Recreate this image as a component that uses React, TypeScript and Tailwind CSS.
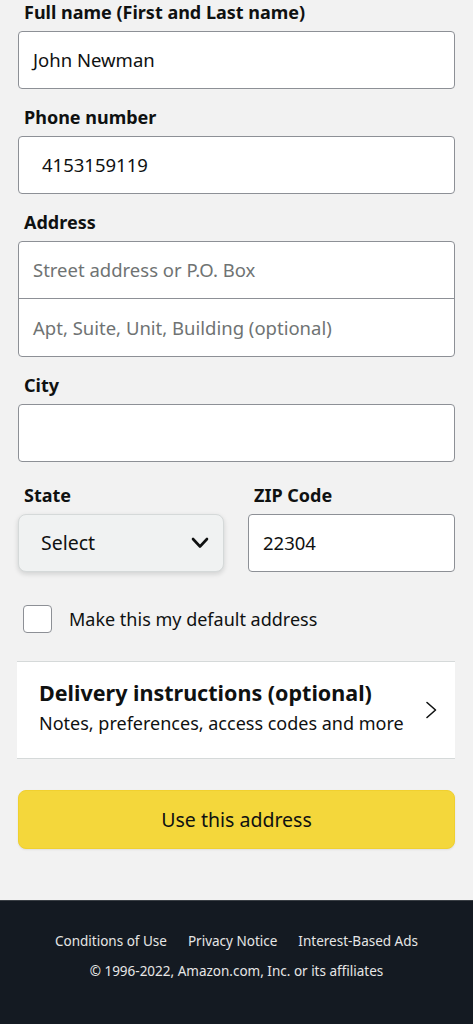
const font = { fontFamily: '"Noto Sans", "Open Sans", Arial, sans-serif' };

function Label({ children, className = "" }: { children: React.ReactNode; className?: string }) {
  return (
    <div className={`h-[24px] leading-[24px] text-[18px] font-bold text-[#0f1111] pl-[6px] ${className}`}>
      {children}
    </div>
  );
}

function TextBox({ value, placeholder, indent = "pl-[14px]" }: { value?: string; placeholder?: string; indent?: string }) {
  return (
    <div
      className={`h-[58px] bg-white border border-[#8d9096] rounded-[4px] flex items-center ${indent} text-[18.5px] ${
        value ? "text-[#0f1111]" : "text-[#6f7373]"
      }`}
    >
      {value ?? placeholder}
    </div>
  );
}

export default function App() {
  return (
    <div className="min-h-[1024px] bg-[#f2f2f2] flex flex-col" style={font}>
      <div className="px-[18px] flex-1">
        {/* Nom complet */}
        <Label>Full name (First and Last name)</Label>
        <div className="mt-[7px]">
          <TextBox value="John Newman" />
        </div>

        <Label className="mt-[16px]">Phone number</Label>
        <div className="mt-[7px]">
          <TextBox value="4153159119" indent="pl-[23px]" />
        </div>

        <Label className="mt-[16px]">Address</Label>
        <div className="mt-[7px] bg-white border border-[#8d9096] rounded-[4px] text-[18.5px] text-[#6f7373]">
          <div className="h-[57px] flex items-center pl-[14px] border-b border-[#8d9096]">Street address or P.O. Box</div>
          <div className="h-[57px] flex items-center pl-[14px]">Apt, Suite, Unit, Building (optional)</div>
        </div>

        <Label className="mt-[16px]">City</Label>
        <div className="mt-[7px]">
          <TextBox value="" />
        </div>

        <div className="mt-[21px] flex gap-[24px]">
          <div className="w-[206px]">
            <Label>State</Label>
            <div className="mt-[7px] h-[58px] bg-[#f0f2f2] border border-[#d5d9d9] rounded-[8px] shadow-[0_2px_5px_rgba(15,17,17,0.15)] flex items-center justify-between pl-[22px] pr-[14px] text-[19.5px] text-[#0f1111]">
              <span>Select</span>
              <svg width="18" height="12" viewBox="0 0 18 12" fill="none">
                <polyline points="2,2 9,9.5 16,2" stroke="#0f1111" strokeWidth="2.6" strokeLinecap="round" strokeLinejoin="round" />
              </svg>
            </div>
          </div>
          <div className="flex-1">
            <Label>ZIP Code</Label>
            <div className="mt-[7px]">
              <TextBox value="22304" />
            </div>
          </div>
        </div>

        <div className="mt-[33px] flex items-center pl-[5px]">
          <div className="w-[29px] h-[28px] bg-white border border-[#8d9096] rounded-[4px]" />
          <span className="ml-[17px] text-[18px] text-[#0f1111]">Make this my default address</span>
        </div>

        <div className="mt-[28px] -ml-[1px] h-[98px] bg-white border-y border-[#d5d9d9] flex items-center justify-between pl-[22px] pr-[17px]">
          <div className="-mt-[5px]">
            <div className="text-[21.5px] font-bold text-[#0f1111] leading-[28px]">Delivery instructions (optional)</div>
            <div className="text-[18px] text-[#0f1111] leading-[28px] mt-[2px]">Notes, preferences, access codes and more</div>
          </div>
          <svg width="13" height="18" viewBox="0 0 13 18" fill="none">
            <polyline points="2,1.5 10.5,9 2,16.5" stroke="#0f1111" strokeWidth="1.6" strokeLinecap="round" strokeLinejoin="round" />
          </svg>
        </div>

        <button className="mt-[31px] w-full h-[59px] bg-[#f4d73b] rounded-[8px] border border-[#f0d02f] text-[19.5px] text-[#0f1111] shadow-[0_1px_2px_rgba(0,0,0,0.08)]">
          Use this address
        </button>
      </div>

      {/* pied de page */}
      <footer className="mt-[51px] h-[124px] bg-[#141a22] border-t border-[#3a3f45] pt-[30px] text-[13.5px] text-[#e6e6e6]">
        <div className="flex justify-center gap-[21px] leading-[20px]">
          <span>Conditions of Use</span>
          <span>Privacy Notice</span>
          <span>Interest-Based Ads</span>
        </div>
        <div className="text-center mt-[10px] leading-[20px]">© 1996-2022, Amazon.com, Inc. or its affiliates</div>
      </footer>
    </div>
  );
}
